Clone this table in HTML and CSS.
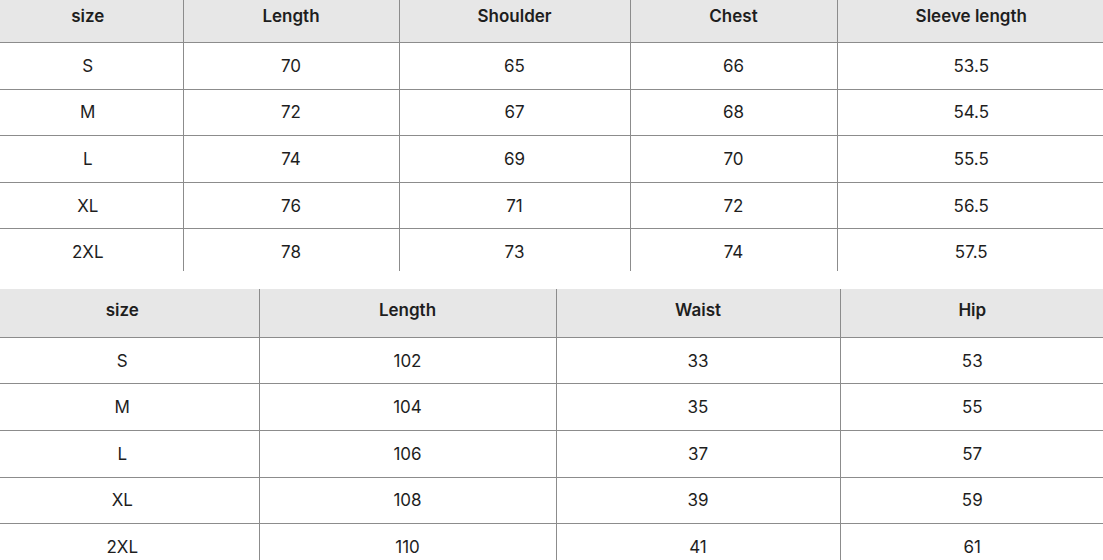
FILE: index.html
```html
<!DOCTYPE html>
<html lang="en">
<head>
<meta charset="utf-8">
<title>Size chart</title>
<link rel="stylesheet" href="styles.css">
</head>
<body>
<div class="page">
  <table class="chart chart-top">
    <colgroup>
      <col class="c1"><col class="c2"><col class="c3"><col class="c4"><col class="c5">
    </colgroup>
    <thead>
      <tr><th>size</th><th>Length</th><th>Shoulder</th><th>Chest</th><th>Sleeve length</th></tr>
    </thead>
    <tbody>
      <tr><td>S</td><td>70</td><td>65</td><td>66</td><td>53.5</td></tr>
      <tr><td>M</td><td>72</td><td>67</td><td>68</td><td>54.5</td></tr>
      <tr><td>L</td><td>74</td><td>69</td><td>70</td><td>55.5</td></tr>
      <tr><td>XL</td><td>76</td><td>71</td><td>72</td><td>56.5</td></tr>
      <tr class="last"><td>2XL</td><td>78</td><td>73</td><td>74</td><td>57.5</td></tr>
    </tbody>
  </table>
  <table class="chart chart-bottom">
    <colgroup>
      <col class="d1"><col class="d2"><col class="d3"><col class="d4">
    </colgroup>
    <thead>
      <tr><th>size</th><th>Length</th><th>Waist</th><th>Hip</th></tr>
    </thead>
    <tbody>
      <tr><td>S</td><td>102</td><td>33</td><td>53</td></tr>
      <tr><td>M</td><td>104</td><td>35</td><td>55</td></tr>
      <tr><td>L</td><td>106</td><td>37</td><td>57</td></tr>
      <tr><td>XL</td><td>108</td><td>39</td><td>59</td></tr>
      <tr><td>2XL</td><td>110</td><td>41</td><td>61</td></tr>
    </tbody>
  </table>
</div>
</body>
</html>
```

FILE: styles.css
```css
html, body {
  margin: 0;
  padding: 0;
  background: #ffffff;
  overflow: hidden;
}

.page {
  display: flex;
  flex-direction: column;
  gap: 18px;
  width: 1103px;
  height: 560px;
  overflow: hidden;
  font-family: Inter, "Liberation Sans", sans-serif;
  color: #1e1e1e;
}

.chart {
  border-collapse: collapse;
  table-layout: fixed;
  flex: none;
}

.chart th,
.chart td {
  padding: 0;
  text-align: center;
  vertical-align: middle;
  border-left: 1px solid #8c8c8c;
  border-top: 1px solid #8c8c8c;
  font-size: 17px;
  line-height: 20px;
}

.chart th:first-child,
.chart td:first-child {
  border-left: none;
}

.chart thead th {
  border-top: none;
  background: #e7e7e7;
  font-weight: 600;
  height: 40px;
  padding-bottom: 6px;
}

.chart tbody td {
  font-weight: 400;
  height: 45.6px;
}

.chart-top {
  width: 1112px;
  margin-left: -7px;
  margin-top: -4px;
}

.chart-top tr.last td {
  height: 38px;
  padding-top: 4px;
}

.c1 { width: 190px; }
.c2 { width: 216px; }
.c3 { width: 231px; }
.c4 { width: 207px; }
.c5 { width: 268px; }

.chart-bottom {
  width: 1118px;
  margin-left: -14px;
}

.chart-bottom thead th {
  height: 41.5px;
}

.d1 { width: 273px; }
.d2 { width: 297px; }
.d3 { width: 284px; }
.d4 { width: 264px; }
```
